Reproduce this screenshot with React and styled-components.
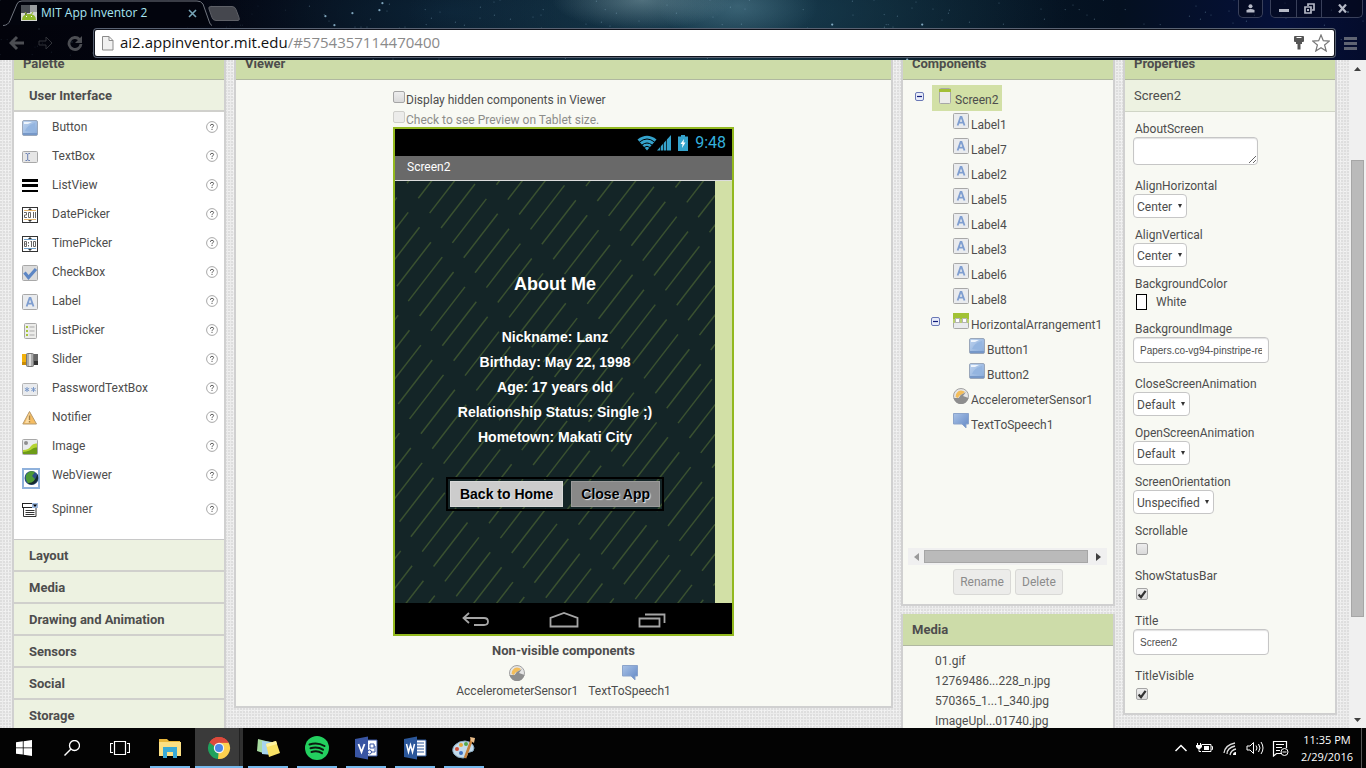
import React, { useId } from "react";
import styled, { createGlobalStyle, css } from "styled-components";

const GlobalStyle = createGlobalStyle`
  * { box-sizing: border-box; }
  body { margin: 0; overflow: hidden; }
  h1, h2, p, ul { margin: 0; padding: 0; }
  button, input, select, textarea { font-family: inherit; margin: 0; }
`;

const Desktop = styled.div`
  display: flex;
  flex-direction: column;
  height: 100vh;
  font-family: Roboto, "Liberation Sans", sans-serif;
  font-size: 12px;
  line-height: 16px;
  color: #4d4d4d;
  background: #000;
`;

/* ---------- browser chrome ---------- */

const BrowserBar = styled.header`
  position: relative;
  flex: none;
  height: 60px;
  overflow: hidden;
  background:
    radial-gradient(ellipse 90px 30px at 47% 0, rgba(170, 200, 205, 0.4), transparent),
    radial-gradient(ellipse 80px 40px at 54% 10%, rgba(120, 165, 180, 0.35), transparent),
    radial-gradient(ellipse 330px 90px at 54% 20%, rgba(35, 82, 104, 0.6), transparent),
    radial-gradient(ellipse 260px 80px at 33% 20%, rgba(12, 36, 56, 0.9), transparent),
    linear-gradient(90deg, #02030b 0, #030511 20%, #061420 36%, #0b2434 50%, #071a27 66%, #041020 82%, #05103a 94%, #040c2c 100%);
`;

const Stars = styled.svg`
  position: absolute;
  inset: 0;
  width: 100%;
  height: 100%;
`;

const TabStrip = styled.div`
  position: relative;
  display: flex;
  justify-content: space-between;
  height: 28px;
`;

const TabGroup = styled.div`
  display: flex;
  padding-left: 3px;
`;

const Tab = styled.div`
  position: relative;
  z-index: 0;
  display: flex;
  align-items: center;
  width: 209px;
  height: 26px;
  padding: 0 15px 0 18px;
  gap: 4px;
  color: #a9e6f2;
  font: 12px/16px "Open Sans", "Noto Sans", sans-serif;
`;

const TabOutline = styled.svg`
  position: absolute;
  z-index: -1;
  left: 0;
  top: 0;
`;

const TabTitle = styled.span`
  flex: 1;
  white-space: nowrap;
`;

const PlainButton = styled.button`
  display: flex;
  align-items: center;
  justify-content: center;
  padding: 0;
  border: 0;
  background: none;
  color: inherit;
`;

const NewTab = styled(PlainButton)`
  align-self: flex-start;
  margin-top: 6px;
  margin-left: -4px;
`;

const WindowButtons = styled.div`
  display: flex;
  align-items: flex-start;
  gap: 7px;
  padding-right: 3px;
`;

const ButtonBox = styled.div`
  display: flex;
  border: 1px solid #39405a;
  border-top: 0;
  border-radius: 0 0 5px 5px;
  background: rgba(3, 6, 20, 0.5);
`;

const WindowButton = styled(PlainButton)`
  width: ${(p) => p.$width}px;
  height: 17px;
  color: #b5b9c6;
  & + & { border-left: 1px solid #39405a; }
`;

const Toolbar = styled.div`
  position: relative;
  display: flex;
  align-items: center;
  height: 30px;
  padding: 0 8px 0 6px;
`;

const NavButton = styled(PlainButton)`
  width: 22px;
  height: 26px;
  margin-right: 7px;
`;

const AddressBar = styled.div`
  display: flex;
  align-items: center;
  flex: 1;
  min-width: 0;
  height: 26px;
  margin-left: 2px;
  padding: 0 4px 0 6px;
  gap: 6px;
  background: #fff;
  border-radius: 2px;
  box-shadow: 0 0 0 1px #10131c, 0 0 0 2px #596272;
`;

const AddressField = styled.div`
  flex: 1;
  height: 24px;
  font: 15px/22px "Open Sans", "Noto Sans", sans-serif;
  color: #8a8a8a;
  white-space: nowrap;
`;

const Host = styled.b`
  font-weight: 400;
  color: #111;
`;

const MenuButton = styled(PlainButton)`
  margin-left: 9px;
`;

/* ---------- page ---------- */

const Viewport = styled.div`
  display: flex;
  flex: 1;
  min-height: 0;
`;

const PageArea = styled.main`
  flex: 1;
  min-width: 0;
  overflow: hidden;
  background-color: #ececec;
  background-image:
    radial-gradient(circle at 1px 1px, #dedede 1px, transparent 1px),
    radial-gradient(circle at 1px 1px, #f3f3f3 1px, transparent 1px);
  background-size: 3px 3px, 4px 5px;
`;

const Workspace = styled.div`
  display: grid;
  grid-template-columns: 214px minmax(0, 1fr) 214px 214px;
  align-items: start;
  gap: 8px;
  margin-top: -12px;
  padding: 0 12px;
`;

const Column = styled.div`
  display: flex;
  flex-direction: column;
  gap: 8px;
`;

const Panel = styled.section`
  border: 2px solid #d0d0d0;
  border-top-width: 0;
  border-bottom-width: 2px;
  background: #f8f9f3;
`;

const PanelTitle = styled.h2`
  height: 32px;
  padding: 0 9px;
  border-bottom: 1px solid #b0b8a0;
  background: #cddca9;
  font-size: 13px;
  font-weight: 700;
  line-height: 32px;
`;

const CategoryButton = styled.button`
  display: block;
  width: 100%;
  height: 32px;
  padding: 1px 15px 0;
  border: 0;
  border-bottom: 2px solid #d0d0cc;
  background: #edf2e1;
  color: inherit;
  font-size: 13px;
  font-weight: 700;
  line-height: 30px;
  text-align: left;
`;

const PaletteList = styled.ul`
  padding-bottom: 16px;
  border-bottom: 1px solid #c8c8c8;
  background: #fff;
  list-style: none;
`;

const PaletteItem = styled.li`
  display: flex;
  align-items: flex-start;
  height: ${(p) => (p.$tall ? 34 : 29)}px;
  padding: 7px 6px 0 8px;
`;

const PaletteIcon = styled.span`
  display: flex;
  width: 30px;
  padding-top: 1px;
`;

const PaletteName = styled.span`
  flex: 1;
`;

const HelpButton = styled(PlainButton)`
  margin-top: 2px;
`;

/* ---------- viewer ---------- */

const ViewerBody = styled.div`
  width: 341px;
  margin: 0 auto;
  padding: 10px 0 7px;
`;

const CheckRow = styled.label`
  display: flex;
  align-items: flex-start;
  height: ${(p) => (p.$last ? 17 : 20)}px;
  color: ${(p) => (p.$dim ? "#8d8d8a" : "inherit")};
  line-height: 20px;
`;

const tick =
  "url(\"data:image/svg+xml,%3Csvg xmlns='http://www.w3.org/2000/svg' viewBox='0 0 10 10'%3E%3Cpath d='M1.6 5.6l2.4 2.6L8.6 1.8' fill='none' stroke='%23333' stroke-width='2.2'/%3E%3C/svg%3E\")";

const Check = styled.input.attrs({ type: "checkbox" })`
  appearance: none;
  flex: none;
  width: 12px;
  height: 12px;
  margin: 1px 1px 0 0;
  border: 1px solid #a5a5a5;
  border-radius: 2px;
  background: linear-gradient(#ededed, #dadada);
  &:checked { background: ${tick} center / 10px no-repeat, linear-gradient(#ededed, #dadada); }
  &:disabled { border-color: #cfcfcb; background: #ececea; }
`;

const Phone = styled.div`
  border: 2px solid #93b91f;
  color: #fff;
`;

const StatusBar = styled.div`
  display: flex;
  align-items: center;
  justify-content: flex-end;
  height: 27px;
  padding-right: 6px;
  background: #000;
  color: #35b0dd;
  font-size: 16px;
`;

const StatusTime = styled.span`
  margin-left: 6px;
`;

const TitleBar = styled.div`
  height: 25px;
  padding-left: 12px;
  border-bottom: 1px solid #dcdcdc;
  background: #696969;
  line-height: 23px;
`;

const ScreenRow = styled.div`
  display: flex;
  background: #d2e0a6;
`;

const Screen = styled.div`
  position: relative;
  display: flex;
  flex-direction: column;
  align-items: center;
  width: 320px;
  height: 422px;
  padding-top: 90px;
  overflow: hidden;
  background: #142527;
  font: 700 14px/25px "Liberation Sans", Arial, sans-serif;
`;

const Stripes = styled.svg`
  position: absolute;
  inset: 0;
`;

const ScreenHeading = styled.h1`
  position: relative;
  margin-bottom: 28px;
  font-size: 18px;
  line-height: 26px;
`;

const ScreenLine = styled.p`
  position: relative;
`;

const Arrangement = styled.div`
  position: relative;
  display: flex;
  gap: 8px;
  margin-top: 27px;
  padding: 2px;
  border: 2px solid #000;
`;

const PhoneButton = styled.button`
  height: 26px;
  padding: 0 9px;
  border: 1px solid ${(p) => (p.$dark ? "#9a9a9a" : "#d8d8d8")};
  background: ${(p) => (p.$dark ? "#888" : "#ccc")};
  color: #000;
  font: 700 14px/22px "Liberation Sans", Arial, sans-serif;
  text-shadow: 1px 1px 1px #eee;
`;

const NavBar = styled.div`
  display: flex;
  align-items: center;
  justify-content: center;
  gap: 58px;
  height: 31px;
  padding-top: 2px;
  background: #000;
`;

const NonVisible = styled.div`
  display: flex;
  flex-direction: column;
  align-items: center;
  padding-top: 7px;
`;

const NonVisibleTitle = styled.b`
  font-size: 13px;
`;

const NonVisibleRow = styled.div`
  display: flex;
  gap: 10px;
  padding-top: 6px;
`;

const NonVisibleItem = styled.div`
  display: flex;
  flex-direction: column;
  align-items: center;
  gap: 2px;
`;

/* ---------- component tree ---------- */

const Tree = styled.ul`
  height: 468px;
  padding: 5px 6px 0 12px;
  list-style: none;
`;

const TreeRow = styled.li`
  display: flex;
  align-items: flex-start;
  height: 25px;
  padding-left: ${(p) => p.$indent}px;
  white-space: nowrap;
`;

const ToggleSlot = styled.span`
  display: flex;
  width: ${(p) => p.$width}px;
  padding-top: 7px;
`;

const TreeNode = styled.span`
  display: flex;
  align-items: flex-start;
  gap: 2px;
  height: 26px;
  padding-top: 3px;
  ${(p) => p.$selected && css`
    padding: 3px 4px 0 5px;
    background: #d2e0a6;
  `}
`;

const TreeLabel = styled.span`
  padding-top: 4px;
`;

const HScroll = styled.div`
  display: flex;
  align-items: center;
  justify-content: space-between;
  height: 17px;
  margin: 0 6px 0 5px;
  padding: 0 6px;
  background: #f0f0f0;
`;

const HThumb = styled.div`
  flex: 1;
  height: 13px;
  margin: 0 8px 0 5px;
  border: 1px solid #a6a6a6;
  background: #bababa;
`;

const TreeActions = styled.div`
  display: flex;
  justify-content: center;
  gap: 4px;
  padding: 4px 0 9px;
`;

const ActionButton = styled.button`
  height: 26px;
  padding: 0 6px;
  border: 1px solid #d9d9d6;
  border-radius: 3px;
  background: #ececea;
  color: #8b8b8b;
  font-size: 12px;
  &:disabled { color: #8b8b8b; }
`;

const MediaList = styled.ul`
  padding: 5px 32px 20px;
  list-style: none;
  line-height: 20px;
`;

const MediaLink = styled.a`
  color: inherit;
  text-decoration: none;
`;

/* ---------- properties ---------- */

const Selected = styled.div`
  height: 32px;
  padding: 0 9px;
  border-bottom: 1px solid #d0d5c6;
  background: #edf2e1;
  font-size: 13px;
  line-height: 31px;
`;

const PropertyList = styled.div`
  padding: 9px 8px 0;
`;

const Property = styled.div`
  height: ${(p) => p.$height}px;
`;

const PropertyName = styled.label`
  display: block;
  padding-left: 2px;
`;

const fieldBox = css`
  display: block;
  border: 1px solid #c6c6c6;
  border-radius: 4px;
  background: #fff;
  color: #4d4d4d;
`;

const TextArea = styled.textarea`
  ${fieldBox}
  width: 125px;
  height: 28px;
  box-shadow: inset 0 1px 1px #e2e2e2;
`;

const TextField = styled.input`
  ${fieldBox}
  width: 136px;
  height: 26px;
  padding: 0 6px;
  font: 10px/16px "Liberation Sans", Arial, sans-serif;
  box-shadow: inset 0 1px 1px #e2e2e2;
`;

const SelectWrap = styled.span`
  position: relative;
  display: inline-block;
`;

const Select = styled.select`
  ${fieldBox}
  appearance: none;
  height: 24px;
  padding: 1px 13px 0 3px;
  font-size: 12px;
`;

const Caret = styled.svg`
  position: absolute;
  right: 5px;
  top: 10px;
  pointer-events: none;
`;

const ColorRow = styled.button`
  display: flex;
  align-items: center;
  gap: 9px;
  height: 20px;
  padding: 0 3px;
  border: 0;
  background: none;
  color: inherit;
  font-size: 12px;
`;

const Swatch = styled.span`
  width: 11px;
  height: 16px;
  border: 1px solid #000;
  background: #fff;
`;

const PropertyCheck = styled(Check)`
  display: block;
  margin: 4px 0 0 3px;
`;

/* ---------- scroll bar ---------- */

const VScroll = styled.div`
  display: flex;
  flex-direction: column;
  align-items: center;
  flex: none;
  width: 17px;
  padding: 7px 2px 6px;
  background: #f0f0f0;
`;

const VTrack = styled.div`
  flex: 1;
  align-self: stretch;
  padding: 89px 0 101px;
`;

const VThumb = styled.div`
  height: 100%;
  border: 1px solid #a6a6a6;
  background: #bababa;
`;

/* ---------- task bar ---------- */

const TaskBar = styled.footer`
  display: flex;
  align-items: stretch;
  flex: none;
  height: 40px;
  background: #030303;
  color: #fff;
`;

const TaskApps = styled.div`
  display: flex;
  gap: 1px;
  padding-left: 2px;
`;

const TaskButton = styled(PlainButton)`
  position: relative;
  width: 48px;
  ${(p) => p.$app && css`
    &::after {
      content: "";
      position: absolute;
      left: ${p.$active ? 0 : 4}px;
      right: ${p.$active ? 0 : 4}px;
      bottom: 0;
      height: 2px;
      background: #76b9ed;
    }
  `}
  ${(p) => p.$active && css`background: linear-gradient(90deg, #3a3a3a 44px, #222 44px 45px, #303030 45px);`}
`;

const Tray = styled.div`
  display: flex;
  align-items: center;
  gap: 8px;
  margin-left: auto;
`;

const Clock = styled.div`
  margin-left: 4px;
  font: 11px/17px "Open Sans", "Noto Sans", sans-serif;
  text-align: center;
  white-space: nowrap;
`;

const PeekEdge = styled.div`
  align-self: stretch;
  width: 5px;
  border-left: 1px solid #555;
`;

/* ---------- icons ---------- */

function Svg({ w = 16, h = 16, children, ...rest }) {
  return (
    <svg width={w} height={h} viewBox={`0 0 ${w} ${h}`} fill="none" aria-hidden="true" {...rest}>
      {children}
    </svg>
  );
}

function Shade({ id, from, to }) {
  return (
    <linearGradient id={id} x1="0" y1="0" x2="1" y2="1">
      <stop offset="0" stopColor={from} />
      <stop offset="1" stopColor={to} />
    </linearGradient>
  );
}

const frame = { x: 0.5, y: 0.5, width: 15, height: 15, rx: 1, stroke: "#a8a8a8", fill: "#e9ebee" };

function ButtonIcon() {
  const id = useId();
  return (
    <Svg>
      <defs><Shade id={id} from="#bdd3ef" to="#86a9d8" /></defs>
      <rect x="0.5" y="0.5" width="15" height="15" rx="1.5" fill={`url(#${id})`} stroke="#9aa7ba" />
      <path d="M2 2h8L6 4H2z" fill="#edf4fc" />
      <path d="M1 13h14v2H1z" fill="#7698c8" />
      <path d="M3 11Q5 5 13 3v9z" fill="#94b5e0" />
    </Svg>
  );
}

function LabelIcon() {
  return (
    <Svg>
      <rect {...frame} />
      <path d="M4.6 12.5L7.6 4h.9l3 8.5M5.8 9.6h4.5" stroke="#7f9ed0" strokeWidth="1.8" />
    </Svg>
  );
}

function TextBoxIcon() {
  return (
    <Svg>
      <rect x="0.5" y="2.5" width="15" height="11" rx="1" stroke="#a8a8a8" fill="#e6e6e6" />
      <path d="M3.5 4.5h1.5l.7.7.7-.7H8M5.7 5v6M3.5 11.5H5l.7-.7.7.7H8" stroke="#6d82b5" />
    </Svg>
  );
}

function ListViewIcon() {
  return (
    <Svg>
      <path d="M0 1h16v3H0zM0 6h16v3H0zM0 12h16v2H0z" fill="#000" />
    </Svg>
  );
}

function DateIcon() {
  return (
    <Svg>
      <rect x="0.5" y="0.5" width="15" height="15" stroke="#333" fill="#fff" />
      <path d="M6 3l2-2 2 2zM6 13l2 2 2-2z" fill="#333" />
      <path d="M2 3.5h12M2 12.5h12" stroke="#e3b46c" />
      <path d="M2 5.5h2.5V8H2.5v2.5H5M6.5 5.5h2v5h-2zM11.5 5v6M13.5 5v6" stroke="#666" />
    </Svg>
  );
}

function TimeIcon() {
  return (
    <Svg>
      <rect x="0.5" y="0.5" width="15" height="15" stroke="#333" fill="#fff" />
      <path d="M6 3l2-2 2 2zM6 13l2 2 2-2z" fill="#333" />
      <path d="M2 3.5h12M2 12.5h12" stroke="#6d9ec9" />
      <path d="M2.5 5.5h2v5h-2zM2.5 8h2M6.5 6v1.5M6.5 9v1.5M9.5 5v6M8.5 5.5h1M11.5 5.5h2v5h-2z" stroke="#666" />
    </Svg>
  );
}

function CheckBoxIcon() {
  return (
    <Svg>
      <rect {...frame} fill="#dcdcdc" />
      <path d="M2.5 7.5l4 5L14 4" stroke="#5d86c4" strokeWidth="3.2" />
    </Svg>
  );
}

function ListPickerIcon() {
  return (
    <Svg>
      <rect x="2.5" y="0.5" width="12" height="15" rx="1" stroke="#a8a8a8" fill="#ececea" />
      <path d="M4 3h2v2H4zM4 7h2v2H4zM4 11h2v2H4z" fill="#a5c53a" />
      <path d="M7.5 4h5M7.5 8h5M7.5 12h5" stroke="#a9a9a9" />
    </Svg>
  );
}

function SliderIcon() {
  return (
    <Svg>
      <path d="M0 2h5v11H0z" fill="#f2b10d" />
      <path d="M0 10h5v3H0z" fill="#c98b07" />
      <path d="M11 2h5v11h-5z" fill="#666" />
      <path d="M11 9h5v4h-5z" fill="#333" />
      <rect x="4.5" y="1.5" width="7" height="13" rx="1" fill="#aaa" stroke="#777" />
      <path d="M8 2v12" stroke="#ddd" strokeWidth="2" />
    </Svg>
  );
}

function PasswordIcon() {
  return (
    <Svg>
      <rect x="0.5" y="2.5" width="15" height="12" rx="1" stroke="#b4b4b4" fill="#e9ebee" />
      <path d="M5 6v5M2.8 7.3l4.4 2.5M7.2 7.3L2.8 9.8M11.5 6v5M9.3 7.3l4.4 2.5M13.7 7.3L9.3 9.8" stroke="#7b99c9" />
    </Svg>
  );
}

function NotifierIcon() {
  return (
    <Svg>
      <path d="M7.5 1.5L14.5 14H.8z" fill="#f6bd62" stroke="#b79a6d" />
      <path d="M7.5 2.5L3 13h4.5z" fill="#fbdca5" />
      <path d="M7.5 5.5V10M7.5 11v1.5" stroke="#a5834a" strokeWidth="1.4" />
    </Svg>
  );
}

function ImageIcon() {
  return (
    <Svg>
      <rect {...frame} />
      <circle cx="4" cy="4" r="2" fill="#8f8f8f" />
      <path d="M1 11q6 0 8-4 2-3 6-2.5V15H1z" fill="#b5d432" />
      <path d="M1 13q7-1 9-3 2-2 5-1.5V15H1z" fill="#6d9c17" />
    </Svg>
  );
}

function WebIcon() {
  return (
    <Svg w={18} h={21}>
      <rect x="1" y="1" width="16" height="19" fill="#fff" stroke="#8fb1dc" strokeWidth="2" />
      <circle cx="9.5" cy="10" r="7" fill="#2c4e86" />
      <path d="M4 7q2-3 5-4l4 1-3 4 3 3-2 4-4 1q-4-3-3-9z" fill="#4d9a35" />
      <path d="M15.5 6q2 5-2 9-4 3-8 0 7 1 10-9z" fill="#152a2e" />
    </Svg>
  );
}

function SpinnerIcon() {
  return (
    <Svg>
      <rect x="0.5" y="1.5" width="15" height="4" fill="#fff" stroke="#222" />
      <path d="M10 1h6v5h-6z" fill="#9bb7dd" />
      <path d="M11 2.5h4l-2 2.5z" fill="#000" />
      <path d="M1.5 6v8.5H14V6M3.5 8.5h9M3.5 10.5h9M3.5 12.5h9" stroke="#333" />
    </Svg>
  );
}

function ScreenIcon() {
  return (
    <Svg>
      <rect x="2.5" y="0.5" width="11" height="15" rx="1" fill="#ececea" stroke="#a8a8a8" />
      <path d="M2 1h12v3H2z" fill="#a3bf38" />
    </Svg>
  );
}

function ArrangementIcon() {
  return (
    <Svg>
      <rect {...frame} />
      <path d="M0 0h16v6H0z" fill="#a1c234" />
      <path d="M0 6h16v4H0z" fill="#b9cf72" />
      <rect x="2.5" y="5.5" width="4" height="4" fill="#fff" stroke="#b5b5b5" />
      <rect x="9.5" y="5.5" width="4" height="4" fill="#fff" stroke="#b5b5b5" />
    </Svg>
  );
}

function SensorIcon() {
  return (
    <Svg>
      <circle cx="8" cy="8" r="7.5" fill="#e5e5e5" stroke="#a2a2a2" />
      <path d="M2.5 9Q3 3 8 2.5q2.5 0 4 1.5L8 7q-2 0-3 3z" fill="#f3bd5a" />
      <path d="M.6 10h5Q8 6 13 4l-3 4 5.5 2A7.6 7.6 0 0 1 .6 10z" fill="#8e8e8e" />
    </Svg>
  );
}

function SpeechIcon() {
  const id = useId();
  return (
    <Svg>
      <defs><Shade id={id} from="#a9c2e6" to="#6288c5" /></defs>
      <path d="M.5.5h15V11H13v4L9 11H.5z" fill={`url(#${id})`} stroke="#8ba4cb" />
    </Svg>
  );
}

function HelpIcon() {
  return (
    <Svg w={12} h={12}>
      <circle cx="6" cy="6" r="5.4" fill="#fff" stroke="#a8a8a8" />
      <path d="M4.4 4.8q0-1.5 1.6-1.5t1.6 1.3q0 .8-.9 1.2-.7.4-.7 1.1M6 7.8v1.2" stroke="#5c5c5c" />
    </Svg>
  );
}

function ToggleIcon() {
  return (
    <Svg w={9} h={9}>
      <rect x="0.5" y="0.5" width="8" height="8" rx="1.5" fill="#e8ecf9" stroke="#6a78b5" />
      <path d="M2 4.5h5" stroke="#101c7c" strokeWidth="1.2" />
    </Svg>
  );
}

/* ---------- data ---------- */

const paletteItems = [
  ["Button", ButtonIcon], ["TextBox", TextBoxIcon], ["ListView", ListViewIcon],
  ["DatePicker", DateIcon], ["TimePicker", TimeIcon], ["CheckBox", CheckBoxIcon],
  ["Label", LabelIcon], ["ListPicker", ListPickerIcon], ["Slider", SliderIcon],
  ["PasswordTextBox", PasswordIcon], ["Notifier", NotifierIcon], ["Image", ImageIcon],
  ["WebViewer", WebIcon], ["Spinner", SpinnerIcon],
];

const categories = ["Layout", "Media", "Drawing and Animation", "Sensors", "Social", "Storage"];

const treeItems = [
  ...[1, 7, 2, 5, 4, 3, 6, 8].map((n) => ({ name: `Label${n}`, Icon: LabelIcon, level: 1 })),
  { name: "HorizontalArrangement1", Icon: ArrangementIcon, level: 1, toggle: true },
  { name: "Button1", Icon: ButtonIcon, level: 2 },
  { name: "Button2", Icon: ButtonIcon, level: 2 },
  { name: "AccelerometerSensor1", Icon: SensorIcon, level: 1 },
  { name: "TextToSpeech1", Icon: SpeechIcon, level: 1 },
];

const mediaFiles = ["01.gif", "12769486...228_n.jpg", "570365_1...1_340.jpg", "ImageUpl...01740.jpg"];

const aboutLines = [
  "Nickname: Lanz", "Birthday: May 22, 1998", "Age: 17 years old",
  "Relationship Status: Single ;)", "Hometown: Makati City",
];

const properties = [
  { name: "AboutScreen", kind: "area" },
  { name: "AlignHorizontal", kind: "select", value: "Center" },
  { name: "AlignVertical", kind: "select", value: "Center" },
  { name: "BackgroundColor", kind: "color", value: "White" },
  { name: "BackgroundImage", kind: "text", value: "Papers.co-vg94-pinstripe-red.jpg" },
  { name: "CloseScreenAnimation", kind: "select", value: "Default" },
  { name: "OpenScreenAnimation", kind: "select", value: "Default" },
  { name: "ScreenOrientation", kind: "select", value: "Unspecified" },
  { name: "Scrollable", kind: "check", value: false },
  { name: "ShowStatusBar", kind: "check", value: true },
  { name: "Title", kind: "text", value: "Screen2" },
  { name: "TitleVisible", kind: "check", value: true },
];

const propertyHeights = { area: 57, select: 49, color: 45, text: 55, check: 45 };

/* Dashes lie on a lattice: one step moves to the next diagonal, the other to the next column. */
const dashes = [];
for (let j = -4; j <= 9; j++) {
  for (let i = -36; i <= 40; i++) {
    const x = 80 + i * 11.35 + j * 89.5;
    const y = 3 + i * 14.9 + j * 1.4;
    if (x > -2 && x < 356 && y > -46 && y < 424) dashes.push([x, y]);
  }
}

const stars = Array.from({ length: 260 }, (_, i) => {
  const x = (i * 347.3 + (i * i * 13.7)) % 1366;
  const y = (i * 23.9 + i * i * 3.1) % 60;
  const big = i % 17 === 0;
  return { x, y, r: big ? 1.1 : 0.6, o: x < 300 ? 0.12 : big ? 0.8 : 0.35 };
});

/* ---------- parts ---------- */

function Chrome() {
  return (
    <BrowserBar>
      <Stars aria-hidden="true">
        {stars.map((s, i) => <circle key={i} cx={s.x} cy={s.y} r={s.r} fill="#9cc7e0" opacity={s.o} />)}
      </Stars>
      <TabStrip>
        <TabGroup>
          <Tab>
            <TabOutline width="209" height="26" aria-hidden="true">
              <path d="M0 25.5q5 0 7-5L14 4q1-3 5-3h175q4 0 6 3l6 17q1 4 3 4.5" fill="#02040d" stroke="#70757f" />
            </TabOutline>
            <Svg>
              <path d="M0 0h16v16H0z" fill="#d5d7d2" />
              <path d="M0 0h9v8H6v2H4V8H0z" fill="#4b4f55" />
              <path d="M9 0h7v7H9z" fill="#9a9d9f" />
              <path d="M1 15q0-6 7-6t7 6z" fill="#8fb82c" />
              <path d="M4 7l2 3M12 7l-2 3" stroke="#8fb82c" />
              <path d="M5 11h1v1H5zM10 11h1v1h-1z" fill="#fff" />
            </Svg>
            <TabTitle>MIT App Inventor 2</TabTitle>
            <PlainButton aria-label="Close tab">
              <Svg w={9} h={9}><path d="M1 1l7 7M8 1L1 8" stroke="#78a6b8" strokeWidth="1.6" /></Svg>
            </PlainButton>
          </Tab>
          <NewTab aria-label="New tab">
            <Svg w={32} h={15}><path d="M3 .5h21q3 0 4 3l3 8q1 3-1 3H8q-3 0-4-3L1 3Q0 .5 3 .5z" fill="#45474e" stroke="#5e6067" /></Svg>
          </NewTab>
        </TabGroup>
        <WindowButtons>
          <ButtonBox>
            <WindowButton $width={23} aria-label="User">
              <Svg w={9} h={9}><circle cx="4.5" cy="2.2" r="2" fill="currentColor" /><path d="M.5 8.5V6q4-2 8 0v2.5z" fill="currentColor" /></Svg>
            </WindowButton>
          </ButtonBox>
          <ButtonBox>
            <WindowButton $width={25} aria-label="Minimize"><Svg w={10} h={9}><path d="M0 5h10v3H0z" fill="currentColor" /></Svg></WindowButton>
            <WindowButton $width={25} aria-label="Restore">
              <Svg w={11} h={11}><path d="M4 3V1h6v6H8M1 4h6v6H1z" stroke="currentColor" strokeWidth="1.7" /><path d="M3 6h2v2H3z" fill="currentColor" /></Svg>
            </WindowButton>
            <WindowButton $width={41} aria-label="Close"><Svg w={9} h={9}><path d="M1 .5l7 8M8 .5l-7 8" stroke="currentColor" strokeWidth="2.2" /></Svg></WindowButton>
          </ButtonBox>
        </WindowButtons>
      </TabStrip>
      <Toolbar>
        <NavButton aria-label="Back"><Svg><path d="M8 2L2 8l6 6M2.5 8H15" stroke="#4c4e53" strokeWidth="3" /></Svg></NavButton>
        <NavButton aria-label="Forward"><Svg><path d="M8 2l6 6-6 6v-4H1V6h7z" stroke="#303238" /></Svg></NavButton>
        <NavButton aria-label="Reload"><Svg><path d="M12.5 4.5A6 6 0 1 0 14 9" stroke="#4c4e53" strokeWidth="2.8" /><path d="M15 1v7H8z" fill="#4c4e53" /></Svg></NavButton>
        <AddressBar>
          <Svg w={13} h={16}><path d="M1.5 1.5H8l4 4V15H1.5zM8 1.5v4h4" fill="#f1f1f1" stroke="#8b8b8b" /></Svg>
          <AddressField><Host>ai2.appinventor.mit.edu</Host>/#5754357114470400</AddressField>
          <PlainButton aria-label="Saved password">
            <Svg w={14} h={16}><path d="M3 1h8q1 0 1 1v4q0 1-1 1h-1v2H8.500v5.500h-3V9H4V7H3Q2 7 2 6V2q0-1 1-1z" fill="#555" /><path d="M4.5 2.5h5" stroke="#fff" /></Svg>
          </PlainButton>
          <PlainButton aria-label="Bookmark this page">
            <Svg w={18} h={18}><path d="M9 1l2.3 5.7 6 .4-4.7 3.9 1.6 6L9 13.7 3.8 17l1.6-6L.7 7.1l6-.4z" stroke="#777" strokeWidth="1.2" /></Svg>
          </PlainButton>
        </AddressBar>
        <MenuButton aria-label="Menu"><Svg w={15} h={15}><path d="M1 2.5h13M1 7.5h13M1 12.5h13" stroke="#5f6472" strokeWidth="3" /></Svg></MenuButton>
      </Toolbar>
    </BrowserBar>
  );
}

function Palette() {
  return (
    <Panel>
      <PanelTitle>Palette</PanelTitle>
      <CategoryButton>User Interface</CategoryButton>
      <PaletteList>
        {paletteItems.map(([name, Icon]) => (
          <PaletteItem key={name} $tall={name === "WebViewer"}>
            <PaletteIcon><Icon /></PaletteIcon>
            <PaletteName>{name}</PaletteName>
            <HelpButton aria-label={`About ${name}`}><HelpIcon /></HelpButton>
          </PaletteItem>
        ))}
      </PaletteList>
      {categories.map((name) => <CategoryButton key={name}>{name}</CategoryButton>)}
    </Panel>
  );
}

function Viewer() {
  return (
    <Panel>
      <PanelTitle>Viewer</PanelTitle>
      <ViewerBody>
        <CheckRow><Check />Display hidden components in Viewer</CheckRow>
        <CheckRow $last $dim><Check disabled />Check to see Preview on Tablet size.</CheckRow>
        <Phone>
          <StatusBar>
            <Svg w={20} h={16}>
              <path d="M10 15.5L.5 4.5Q10-3 19.5 4.5z" fill="#35a3cc" />
              <path d="M2.5 7Q10 1 17.5 7M5 10q5-4 10 0M7 12.5q3-2.5 6 0" stroke="#000" />
            </Svg>
            <Svg w={14} h={16}><path d="M0 15.5L14 0v15.5z" fill="#35a3cc" /><path d="M3.5 3v13M6.5 3v13M9.5 3v13" stroke="#000" strokeWidth=".7" /></Svg>
            <Svg w={18} h={16}><path d="M7 1.5h3V0h4v1.5h3V16H7z" fill="#35a3cc" /><path d="M13 4L9.5 9h2l-.5 4 3.5-5.5h-2z" fill="#fff" /></Svg>
            <StatusTime>9:48</StatusTime>
          </StatusBar>
          <TitleBar>Screen2</TitleBar>
          <ScreenRow>
            <Screen>
              <Stripes width="320" height="422" aria-hidden="true">
                {dashes.map(([x, y]) => (
                  <line key={`${x},${y}`} x1={x} y1={y} x2={x - 34} y2={y + 44} transform="translate(0 0)" stroke="#3a5130" strokeWidth="1.5" />
                ))}
              </Stripes>
              <ScreenHeading>About Me</ScreenHeading>
              {aboutLines.map((line) => <ScreenLine key={line}>{line}</ScreenLine>)}
              <Arrangement>
                <PhoneButton>Back to Home</PhoneButton>
                <PhoneButton $dark>Close App</PhoneButton>
              </Arrangement>
            </Screen>
          </ScreenRow>
          <NavBar>
            <Svg w={30} h={18}><path d="M8 2L2.5 7 8 12M3 7h20q4 0 4 3.5T23 14H13" stroke="#a5a5a5" strokeWidth="1.8" /></Svg>
            <Svg w={30} h={18}><path d="M1.5 15.5V7L15 2l13.5 5v8.5z" stroke="#a5a5a5" strokeWidth="1.8" /></Svg>
            <Svg w={30} h={18}><path d="M2.5 7.5h20v8h-20zM8 3.5h19.5V12" stroke="#a5a5a5" strokeWidth="1.8" /></Svg>
          </NavBar>
        </Phone>
        <NonVisible>
          <NonVisibleTitle>Non-visible components</NonVisibleTitle>
          <NonVisibleRow>
            <NonVisibleItem><SensorIcon />AccelerometerSensor1</NonVisibleItem>
            <NonVisibleItem><SpeechIcon />TextToSpeech1</NonVisibleItem>
          </NonVisibleRow>
        </NonVisible>
      </ViewerBody>
    </Panel>
  );
}

function Components() {
  return (
    <Panel>
      <PanelTitle>Components</PanelTitle>
      <Tree>
        <TreeRow $indent={0}>
          <ToggleSlot $width={17}><ToggleIcon /></ToggleSlot>
          <TreeNode $selected><ScreenIcon /><TreeLabel>Screen2</TreeLabel></TreeNode>
        </TreeRow>
        {treeItems.map(({ name, Icon, level, toggle }) => (
          <TreeRow key={name} $indent={level * 16}>
            <ToggleSlot $width={22}>{toggle && <ToggleIcon />}</ToggleSlot>
            <TreeNode><Icon /><TreeLabel>{name}</TreeLabel></TreeNode>
          </TreeRow>
        ))}
      </Tree>
      <HScroll>
        <Svg w={5} h={8}><path d="M5 0v8L0 4z" fill="#9a9a9a" /></Svg>
        <HThumb />
        <Svg w={5} h={8}><path d="M0 0v8l5-4z" fill="#404040" /></Svg>
      </HScroll>
      <TreeActions>
        <ActionButton disabled>Rename</ActionButton>
        <ActionButton disabled>Delete</ActionButton>
      </TreeActions>
    </Panel>
  );
}

function Media() {
  return (
    <Panel>
      <PanelTitle>Media</PanelTitle>
      <MediaList>
        {mediaFiles.map((f) => <li key={f}><MediaLink href="#media">{f}</MediaLink></li>)}
      </MediaList>
    </Panel>
  );
}

function Field({ kind, id, value }) {
  if (kind === "area") return <TextArea id={id} />;
  if (kind === "text") return <TextField id={id} defaultValue={value} />;
  if (kind === "check") return <PropertyCheck id={id} defaultChecked={value} />;
  if (kind === "color") return <ColorRow id={id}><Swatch />{value}</ColorRow>;
  return (
    <SelectWrap>
      <Select id={id} defaultValue={value}><option>{value}</option></Select>
      <Caret width="4" height="4" aria-hidden="true"><path d="M0 0h4L2 4z" fill="#333" /></Caret>
    </SelectWrap>
  );
}

function Properties() {
  return (
    <Panel>
      <PanelTitle>Properties</PanelTitle>
      <Selected>Screen2</Selected>
      <PropertyList>
        {properties.map(({ name, kind, value }) => (
          <Property key={name} $height={propertyHeights[kind]}>
            <PropertyName htmlFor={name}>{name}</PropertyName>
            <Field kind={kind} id={name} value={value} />
          </Property>
        ))}
      </PropertyList>
    </Panel>
  );
}

const taskApps = [
  { name: "File Explorer", art: <Svg w={24} h={24}><path d="M1 3h8l2 2h11v15H1z" fill="#e8b63a" /><path d="M1 6h22v14H1z" fill="#fbdf83" /><path d="M5 11h14v11h-4v-6H9v6H5z" fill="#38a9d6" /></Svg> },
  {
    name: "Chrome", active: true,
    art: (
      <Svg w={24} h={24}>
        <path d="M12 12L2.47 6.5A11 11 0 0 1 21.53 6.5z" fill="#dc4a3c" />
        <path d="M12 12L2.47 6.5A11 11 0 0 0 12 23l4-7z" fill="#1fa15d" />
        <path d="M12 12l-1 11a11 11 0 0 0 10.53-16.5H12z" fill="#fdd04e" />
        <path d="M12 1a11 11 0 0 1 9.5 5.8H12L7 10 2.5 6.5A11 11 0 0 1 12 1z" fill="#dc4a3c" />
        <circle cx="12" cy="12" r="5.2" fill="#f4f4f4" /><circle cx="12" cy="12" r="4" fill="#4a86e8" />
      </Svg>
    ),
  },
  { name: "Sticky Notes", art: <Svg w={26} h={24}><path d="M3 3l12 3-4 12-9-3z" fill="#a8dba0" /><path d="M7 5l10 1v13l-10-1z" fill="#a6d4ee" /><path d="M11 8l10-3 4 12-11 4z" fill="#f8e265" /><path d="M11 8l10-3 1 3-10 3z" fill="#fdf2a0" /></Svg> },
  { name: "Spotify", art: <Svg w={24} h={24}><circle cx="12" cy="12" r="12" fill="#23d05f" /><path d="M4.5 8.5q8-2.5 15 1.5M5.5 12.3q7-2 12.5 1.4M6.5 16q6-1.7 10.5 1.1" stroke="#0c1a10" strokeWidth="2" strokeLinecap="round" /></Svg> },
  { name: "Visio", art: <Svg w={24} h={24}><path d="M12 4h11v16H12z" fill="#fff" stroke="#3955a3" /><path d="M16 8h4v4h-4zM20 10h1v6h-4" stroke="#3955a3" /><circle cx="15.5" cy="16" r="2" stroke="#3955a3" /><path d="M1 3L14 .5v23L1 21z" fill="#3955a3" /><path d="M4.5 8l3 8 3-8" stroke="#fff" strokeWidth="1.8" /></Svg> },
  { name: "Word", art: <Svg w={24} h={24}><path d="M12 4h11v16H12z" fill="#fff" stroke="#2b579a" /><path d="M14 7h7M14 10h7M14 13h7M14 16h7" stroke="#2b579a" /><path d="M1 3L14 .5v23L1 21z" fill="#2b579a" /><path d="M3.5 8l2 8 2-7 2 7 2-8" stroke="#fff" strokeWidth="1.5" /></Svg> },
  { name: "Paint", art: <Svg w={24} h={24}><path d="M2 18q-3-5 1-9t10-4q8 1 9 7 0 4-4 4-3 0-3 3 0 3-4 3-6 0-9-4z" fill="#c4dcec" stroke="#88a9c0" /><circle cx="5" cy="13" r="2" fill="#d14f37" /><circle cx="9" cy="9" r="2" fill="#e6a93a" /><circle cx="14" cy="8" r="2" fill="#53a84b" /><circle cx="9" cy="17" r="2" fill="#3f6fc0" /><path d="M20 3l-7 19" stroke="#c5803a" strokeWidth="2.6" /><path d="M19 5l-1-4 5 1-1 5z" fill="#e9bd8a" /></Svg> },
];

function Taskbar() {
  return (
    <TaskBar>
      <TaskButton aria-label="Start"><Svg><path d="M0 2.3L6.8 1.3v6.2H0zM7.6 1.2L16 0v7.5H7.6zM0 8.3h6.8v6.3L0 13.7zM7.6 8.3H16V16l-8.4-1.2z" fill="#fff" /></Svg></TaskButton>
      <TaskButton aria-label="Search"><Svg><circle cx="10.5" cy="5.5" r="5" stroke="#fff" strokeWidth="1.3" /><path d="M7 9L.5 15.5" stroke="#fff" strokeWidth="1.4" /></Svg></TaskButton>
      <TaskButton aria-label="Task View"><Svg w={20} h={16}><path d="M4.5 1.5h11v13h-11zM3 3.5H.5v9H3M17 3.5h2.5v9H17" stroke="#fff" strokeWidth="1.2" /></Svg></TaskButton>
      <TaskApps>
        {taskApps.map(({ name, art, active }) => (
          <TaskButton key={name} aria-label={name} $app $active={active}>{art}</TaskButton>
        ))}
      </TaskApps>
      <Tray>
        <PlainButton aria-label="Show hidden icons"><Svg w={14} h={16}><path d="M1.5 11L7 5.5l5.5 5.5" stroke="#fff" strokeWidth="1.5" /></Svg></PlainButton>
        <PlainButton aria-label="Battery"><Svg w={18} h={16}><path d="M5.5 4.5H15v7H6M15.5 6.5h1v3h-1M3 9v2.5h2M1.5 3v2M4.5 3v2" stroke="#fff" /><path d="M8 6h5v4H8zM0 5h6v2L4 9H2L0 7z" fill="#fff" /></Svg></PlainButton>
        <PlainButton aria-label="Network"><Svg><path d="M2 13Q3 5 13 3M5 14q0-6 8-8M8 15q1-5 6-6" stroke="#ddd" strokeWidth="1.3" /><path d="M11 15q0-3 3-3v3z" fill="#fff" /></Svg></PlainButton>
        <PlainButton aria-label="Volume"><Svg w={18} h={16}><path d="M1 6h3l3.5-3.5v11L4 10H1zM10 5.5q2 2.5 0 5M12.5 4q3 4 0 8M15 2q4 6 0 12" stroke="#fff" /></Svg></PlainButton>
        <PlainButton aria-label="Notifications"><Svg w={17} h={17}><path d="M9 13.5H4.5L1.5 16V1.5h13V8M4 4.5h8M4 7.5h6M4 10.5h4" stroke="#fff" strokeWidth="1.2" /><circle cx="12.5" cy="12" r="3.5" stroke="#fff" /><path d="M10.5 12h4" stroke="#fff" /></Svg></PlainButton>
        <Clock>11:35 PM<br />2/29/2016</Clock>
        <PeekEdge />
      </Tray>
    </TaskBar>
  );
}

export default function App() {
  return (
    <Desktop>
      <GlobalStyle />
      <Chrome />
      <Viewport>
        <PageArea>
          <Workspace>
            <Palette />
            <Viewer />
            <Column>
              <Components />
              <Media />
            </Column>
            <Properties />
          </Workspace>
        </PageArea>
        <VScroll>
          <Svg w={7} h={4}><path d="M0 4h7L3.5 0z" fill="#404040" /></Svg>
          <VTrack><VThumb /></VTrack>
          <Svg w={7} h={4}><path d="M0 0h7L3.5 4z" fill="#404040" /></Svg>
        </VScroll>
      </Viewport>
      <Taskbar />
    </Desktop>
  );
}
